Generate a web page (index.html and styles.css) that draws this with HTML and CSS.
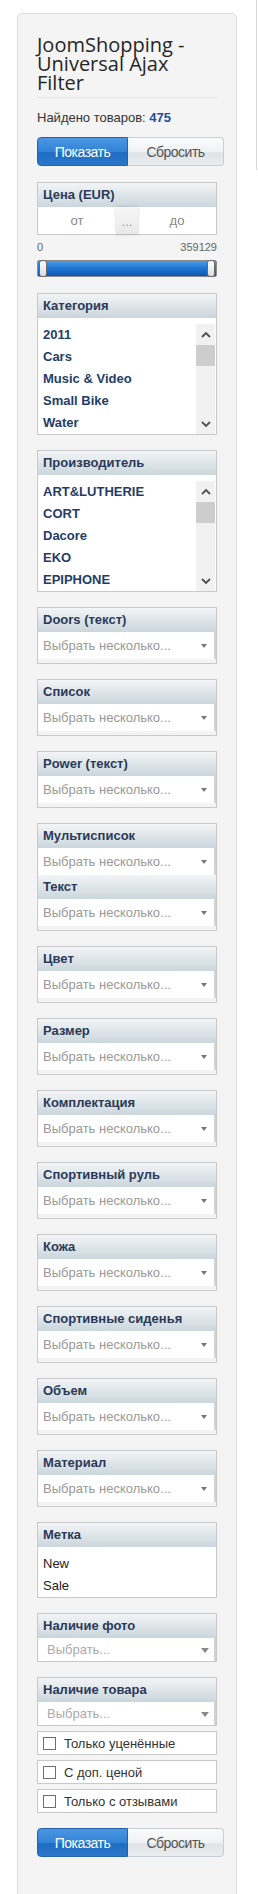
FILE: index.html
```html
<!DOCTYPE html>
<html lang="ru">
<head>
  <meta charset="UTF-8" />
  <meta name="viewport" content="width=device-width, initial-scale=1.0" />
  <title>JoomShopping - Universal Ajax Filter</title>
  <link rel="stylesheet" href="styles.css">
</head>
<body>
  <div class="edge"></div>

  <div class="filter">
    <h3 class="filter-title">JoomShopping - Universal Ajax Filter</h3>

    <div class="found">Найдено товаров: <b>475</b></div>

    <div class="buttons">
      <button class="btn-show" type="button">Показать</button>
      <button class="btn-reset" type="button">Сбросить</button>
    </div>

    <div class="box">
      <div class="box-head">Цена (EUR)</div>
      <div class="price-inputs">
        <span class="price-field">от</span>
        <span class="price-sep">...</span>
        <span class="price-field">до</span>
      </div>
    </div>
    <div class="range-values"><span>0</span><span>359129</span></div>
    <div class="range"><span class="handle"></span><span class="handle"></span></div>

    <div class="box box-list">
      <div class="box-head">Категория</div>
      <div class="list-wrap">
        <ul class="list">
          <li>2011</li>
          <li>Cars</li>
          <li>Music &amp; Video</li>
          <li>Small Bike</li>
          <li>Water</li>
        </ul>
        <div class="scroll">
          <span class="scroll-btn"><svg width="10" height="7" viewBox="0 0 10 7"><polyline points="1,6 5,2 9,6" fill="none" stroke="#505050" stroke-width="1.8"/></svg></span>
          <span class="scroll-thumb"></span>
          <span class="scroll-btn scroll-down"><svg width="10" height="7" viewBox="0 0 10 7"><polyline points="1,1 5,5 9,1" fill="none" stroke="#505050" stroke-width="1.8"/></svg></span>
        </div>
      </div>
    </div>

    <div class="box box-list">
      <div class="box-head">Производитель</div>
      <div class="list-wrap">
        <ul class="list">
          <li>ART&amp;LUTHERIE</li>
          <li>CORT</li>
          <li>Dacore</li>
          <li>EKO</li>
          <li>EPIPHONE</li>
        </ul>
        <div class="scroll">
          <span class="scroll-btn"><svg width="10" height="7" viewBox="0 0 10 7"><polyline points="1,6 5,2 9,6" fill="none" stroke="#505050" stroke-width="1.8"/></svg></span>
          <span class="scroll-thumb"></span>
          <span class="scroll-btn scroll-down"><svg width="10" height="7" viewBox="0 0 10 7"><polyline points="1,1 5,5 9,1" fill="none" stroke="#505050" stroke-width="1.8"/></svg></span>
        </div>
      </div>
    </div>

    <div class="box box-select">
      <div class="box-head">Doors (текст)</div>
      <div class="select">Выбрать несколько...</div>
    </div>

    <div class="box box-select">
      <div class="box-head">Список</div>
      <div class="select">Выбрать несколько...</div>
    </div>

    <div class="box box-select">
      <div class="box-head">Power (текст)</div>
      <div class="select">Выбрать несколько...</div>
    </div>

    <div class="box box-select">
      <div class="box-head">Мультисписок</div>
      <div class="select">Выбрать несколько...</div>
      <div class="box-head">Текст</div>
      <div class="select">Выбрать несколько...</div>
    </div>

    <div class="box box-select">
      <div class="box-head">Цвет</div>
      <div class="select">Выбрать несколько...</div>
    </div>

    <div class="box box-select">
      <div class="box-head">Размер</div>
      <div class="select">Выбрать несколько...</div>
    </div>

    <div class="box box-select">
      <div class="box-head">Комплектация</div>
      <div class="select">Выбрать несколько...</div>
    </div>

    <div class="box box-select">
      <div class="box-head">Спортивный руль</div>
      <div class="select">Выбрать несколько...</div>
    </div>

    <div class="box box-select">
      <div class="box-head">Кожа</div>
      <div class="select">Выбрать несколько...</div>
    </div>

    <div class="box box-select">
      <div class="box-head">Спортивные сиденья</div>
      <div class="select">Выбрать несколько...</div>
    </div>

    <div class="box box-select">
      <div class="box-head">Объем</div>
      <div class="select">Выбрать несколько...</div>
    </div>

    <div class="box box-select">
      <div class="box-head">Материал</div>
      <div class="select">Выбрать несколько...</div>
    </div>

    <div class="box">
      <div class="box-head">Метка</div>
      <ul class="tags">
        <li>New</li>
        <li>Sale</li>
      </ul>
    </div>

    <div class="box">
      <div class="box-head">Наличие фото</div>
      <div class="select select-one">Выбрать...</div>
    </div>

    <div class="box box-tight">
      <div class="box-head">Наличие товара</div>
      <div class="select select-one">Выбрать...</div>
    </div>

    <label class="check"><span class="check-box"></span>Только уценённые</label>
    <label class="check"><span class="check-box"></span>С доп. ценой</label>
    <label class="check"><span class="check-box"></span>Только с отзывами</label>

    <div class="buttons buttons-bottom">
      <button class="btn-show" type="button">Показать</button>
      <button class="btn-reset" type="button">Сбросить</button>
    </div>
  </div>
</body>
</html>
```

FILE: styles.css
```css
* { box-sizing: border-box; margin: 0; padding: 0; }
body {
  font-family: 'Liberation Sans', Arial, sans-serif;
  font-size: 13px;
  color: #333;
  background: #fff;
}
.edge {
  position: absolute;
  top: 0;
  right: 1px;
  width: 1px;
  height: 170px;
  background: #d6d6d6;
}
.filter {
  margin: 13px 0 0 17px;
  width: 220px;
  background: #f4f4f4;
  border: 1px solid #dedede;
  border-radius: 5px;
  padding: 21px 19px 60px;
}
.filter-title {
  font-family: 'Open Sans', sans-serif;
  font-size: 20px;
  line-height: 19px;
  font-weight: normal;
  color: #262626;
  padding-bottom: 5px;
  border-bottom: 1px solid #e6e6e6;
}
.found {
  margin-top: 12px;
  line-height: 16px;
  color: #333;
}
.found b {
  color: #1d4ea6;
}
.buttons {
  display: flex;
  width: 187px;
  height: 29px;
  margin-top: 11px;
}
.buttons button {
  font-family: 'Liberation Sans', Arial, sans-serif;
  font-size: 14px;
  letter-spacing: -0.5px;
  cursor: pointer;
}
.btn-show {
  width: 91px;
  color: #fff;
  border: 1px solid #2563ad;
  border-radius: 4px 0 0 4px;
  background: linear-gradient(#4a96e2 0%, #3383d6 50%, #1f6cc3 54%, #2a77cb 100%);
}
.btn-reset {
  flex: 1;
  color: #555;
  border: 1px solid #c9ced3;
  border-left: none;
  border-radius: 0 4px 4px 0;
  background: linear-gradient(#fbfcfc 0%, #eff1f3 50%, #dfe3e7 56%, #ebeef0 100%);
}
.buttons-bottom {
  margin-top: 15px;
}
.box {
  margin-top: 16px;
  border: 1px solid #c9c9c9;
  background: #fff;
}
.box-head {
  height: 24px;
  line-height: 24px;
  padding-left: 5px;
  font-weight: bold;
  color: #2b3a58;
  background: linear-gradient(#f3f5f7, #cad6dc);
}
.price-inputs {
  display: flex;
  height: 27px;
  line-height: 27px;
  color: #888;
}
.price-field {
  flex: 1;
  text-align: center;
}
.price-sep {
  width: 22px;
  text-align: center;
  line-height: 30px;
  color: #999;
  background: linear-gradient(#f7f7f7, #e8e8e8);
  box-shadow: 0 0 3px rgba(0,0,0,0.18);
}
.range-values {
  display: flex;
  justify-content: space-between;
  margin-top: 6px;
  font-size: 11px;
  line-height: 13px;
  color: #666;
}
.range {
  display: flex;
  justify-content: space-between;
  margin-top: 6px;
  height: 17px;
  padding: 0 1px;
  border: 1px solid #8c8c8c;
  border-radius: 2px;
  background: linear-gradient(#4c9de9, #1f74d3 50%, #0b57b0);
}
.handle {
  width: 8px;
  height: 17px;
  margin-top: -1px;
  border: 1px solid #6a6a6a;
  border-radius: 3px;
  background: linear-gradient(#fff, #dcdcdc);
}
.box-list {
  margin-top: 16px;
}
.box-list + .box-list,
.box-list + .box-select,
.box-select + .box-select,
.box-select + .box {
  margin-top: 15px;
}
.box + .box {
  margin-top: 15px;
}
.list-wrap {
  display: flex;
  padding: 6px 1px 0 0;
}
.list {
  flex: 1;
  list-style: none;
  padding-left: 5px;
}
.list li {
  height: 22px;
  line-height: 22px;
  font-weight: bold;
  color: #1f3d68;
  white-space: nowrap;
}
.scroll {
  display: flex;
  flex-direction: column;
  width: 19px;
  height: 110px;
  background: #f1f1f1;
}
.scroll-btn {
  height: 17px;
  display: flex;
  align-items: center;
  justify-content: center;
  padding-top: 3px;
}
.scroll-thumb {
  height: 21px;
  margin-top: 4px;
  background: #cdcdcd;
}
.scroll-down {
  margin-top: auto;
  padding-top: 0;
  padding-bottom: 3px;
}
.box-select {
  background: #f3f3f3;
  padding-bottom: 4px;
}
.select {
  position: relative;
  height: 27px;
  line-height: 27px;
  padding-left: 5px;
  background: #fff;
  color: #999;
  border-right: 2px solid #d2d2d2;
}
.select::after {
  content: "";
  position: absolute;
  right: 7px;
  top: 12px;
  border-left: 3px solid transparent;
  border-right: 3px solid transparent;
  border-top: 4px solid #777;
}
.select-one {
  height: 23px;
  line-height: 23px;
  padding-left: 9px;
  color: #aaa;
}
.select-one::after {
  right: 5px;
  top: 10px;
  border-left-width: 4px;
  border-right-width: 4px;
  border-top-width: 5px;
  border-top-color: #8a8a8a;
}
.tags {
  list-style: none;
  padding: 6px 0 0 5px;
}
.tags li {
  height: 22px;
  line-height: 22px;
  color: #222;
}
.check {
  display: flex;
  align-items: center;
  height: 24px;
  margin-top: 5px;
  padding-left: 5px;
  border: 1px solid #c9c9c9;
  background: #fff;
  color: #333;
}
.check-box {
  width: 13px;
  height: 13px;
  margin-right: 8px;
  border: 1px solid #6f6f6f;
  background: #fff;
}
```
